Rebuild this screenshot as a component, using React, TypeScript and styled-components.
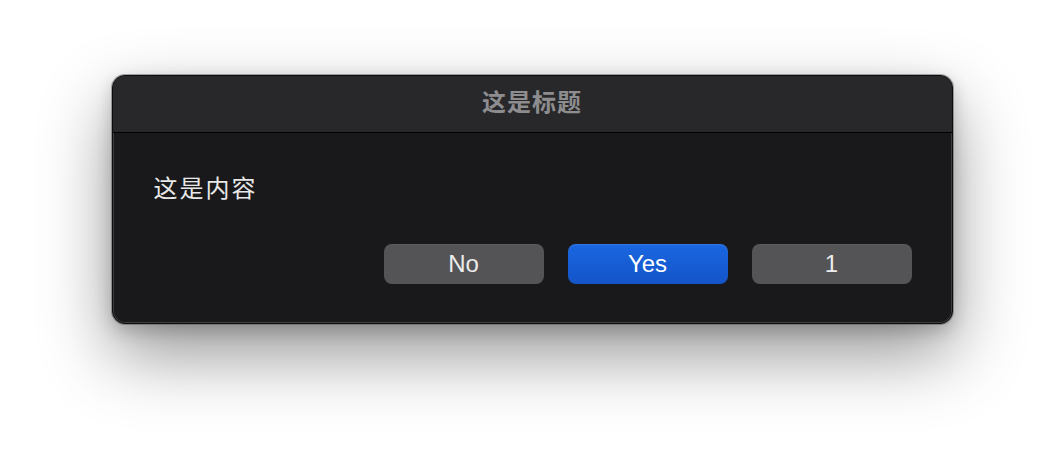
import styled, { createGlobalStyle } from "styled-components";

const GlobalStyle = createGlobalStyle`
  html, body {
    margin: 0;
    padding: 0;
    background: #ffffff;
  }
  body {
    font-family: "Liberation Sans", "Noto Sans CJK SC", sans-serif;
  }
`;

type ButtonKind = "default" | "primary";

const buttons: { label: string; kind: ButtonKind }[] = [
  { label: "No", kind: "default" },
  { label: "Yes", kind: "primary" },
  { label: "1", kind: "default" },
];

export default function App() {
  return (
    <>
      <GlobalStyle />
      <Page>
        <DialogWindow>
          <TitleBar>
            <Title>这是标题</Title>
          </TitleBar>
          <DialogBody>
            <Message>这是内容</Message>
            <ButtonRow>
              {buttons.map((b) => (
                <DialogButton key={b.label} $kind={b.kind}>
                  {b.label}
                </DialogButton>
              ))}
            </ButtonRow>
          </DialogBody>
        </DialogWindow>
      </Page>
    </>
  );
}

const Page = styled.div`
  width: 1064px;
  height: 472px;
  box-sizing: border-box;
  padding-top: 75px;
  display: flex;
  justify-content: center;
  align-items: flex-start;
`;

const DialogWindow = styled.div`
  width: 841px;
  box-sizing: border-box;
  border: 1px solid #0c0c0d;
  border-radius: 13px;
  overflow: hidden;
  background: #19191b;
  box-shadow:
    inset 0 0 0 1px rgba(255, 255, 255, 0.16),
    0 0 0 1px rgba(90, 90, 90, 0.5),
    0 30px 70px rgba(0, 0, 0, 0.42),
    0 6px 18px rgba(0, 0, 0, 0.2);
`;

const TitleBar = styled.div`
  height: 57px;
  box-sizing: border-box;
  padding-bottom: 6px;
  display: flex;
  align-items: center;
  justify-content: center;
  background: #28282a;
  border-bottom: 1px solid #000000;
`;

const Title = styled.div`
  font-family: "Noto Sans CJK SC", sans-serif;
  font-size: 24px;
  font-weight: 700;
  letter-spacing: 1px;
  color: #8d8d8f;
  line-height: 1;
`;

const DialogBody = styled.div`
  display: flex;
  flex-direction: column;
  padding: 38px 40px 39px 41px;
`;

const Message = styled.div`
  font-family: "Noto Sans CJK SC", sans-serif;
  font-size: 24px;
  letter-spacing: 2px;
  line-height: 32px;
  color: #e8e8e8;
`;

const ButtonRow = styled.div`
  display: flex;
  justify-content: flex-end;
  gap: 24px;
  margin-top: 41px;
`;

const DialogButton = styled.button<{ $kind: ButtonKind }>`
  width: 160px;
  height: 40px;
  border: none;
  border-radius: 8px;
  padding: 0;
  font-family: "Liberation Sans", "Noto Sans CJK SC", sans-serif;
  font-size: 24px;
  color: ${(p) => (p.$kind === "primary" ? "#ffffff" : "#ececec")};
  background: ${(p) =>
    p.$kind === "primary"
      ? "linear-gradient(to bottom, #1a67e2, #1454c7)"
      : "#545456"};
  box-shadow: ${(p) =>
    p.$kind === "primary"
      ? "inset 0 1px 0 rgba(255,255,255,0.12)"
      : "inset 0 1px 0 rgba(255,255,255,0.05)"};
`;
